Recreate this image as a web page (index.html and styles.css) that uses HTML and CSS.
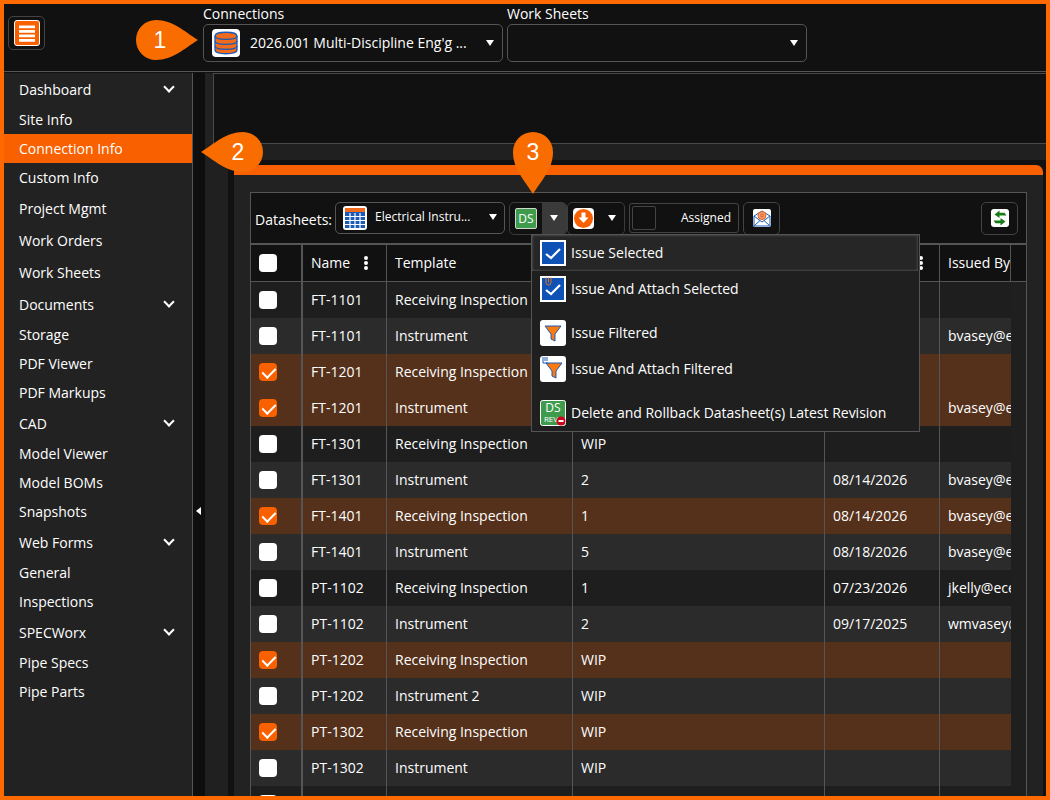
FILE: index.html
```html
<!DOCTYPE html>
<html lang="en">

<head>
  <meta charset="UTF-8">
  <meta name="viewport" content="width=device-width, initial-scale=1.0">
  <title>Connection Info</title>
  <link rel="stylesheet" href="styles.css">
</head>

<body>
  <div class="app">
    <header class="topbar">
      <button class="menu-btn">
        <svg width="26" height="26" viewBox="0 0 26 26">
          <rect x="0.5" y="0.5" width="25" height="25" rx="2.5" fill="#f86000" stroke="#fff"/>
          <path d="M5 5.500h16v2.800H5zM5 10h16v2.800H5zM5 14.500h16v2.800H5zM5 19h16v2.800H5z" fill="#fff"/>
        </svg>
      </button>
      <div class="field field-connections">
        <label>Connections</label>
        <div class="select">
          <svg class="select-icon" width="28" height="28" viewBox="0 0 28 28">
            <rect width="28" height="28" rx="4" fill="#fff"/>
            <path d="M3 7c0-5 22-5 22 0v14c0 5-22 5-22 0z" fill="#f26a1b" stroke="#1b5bb5" stroke-width="1.3"/>
            <path d="M3 7c0 4.500 22 4.500 22 0M3 12c0 4.500 22 4.500 22 0M3 17c0 4.500 22 4.500 22 0" fill="none" stroke="#1b5bb5" stroke-width="1.3"/>
          </svg>
          <span class="select-text">2026.001 Multi-Discipline Eng'g ...</span>
          <i class="caret"></i>
        </div>
      </div>
      <div class="field">
        <label>Work Sheets</label>
        <div class="select">
          <span class="select-text"></span>
          <i class="caret"></i>
        </div>
      </div>
    </header>

    <div class="main">
      <nav class="sidebar">
        <a class="nav-item nav-parent">Dashboard<i class="chevron"></i></a>
        <a class="nav-item">Site Info</a>
        <a class="nav-item active">Connection Info</a>
        <a class="nav-item">Custom Info</a>
        <a class="nav-item nav-parent">Project Mgmt</a>
        <a class="nav-item nav-parent">Work Orders</a>
        <a class="nav-item nav-parent">Work Sheets</a>
        <a class="nav-item nav-parent">Documents<i class="chevron"></i></a>
        <a class="nav-item">Storage</a>
        <a class="nav-item">PDF Viewer</a>
        <a class="nav-item">PDF Markups</a>
        <a class="nav-item nav-parent">CAD<i class="chevron"></i></a>
        <a class="nav-item">Model Viewer</a>
        <a class="nav-item">Model BOMs</a>
        <a class="nav-item">Snapshots</a>
        <a class="nav-item nav-parent">Web Forms<i class="chevron"></i></a>
        <a class="nav-item">General</a>
        <a class="nav-item">Inspections</a>
        <a class="nav-item nav-parent">SPECWorx<i class="chevron"></i></a>
        <a class="nav-item">Pipe Specs</a>
        <a class="nav-item">Pipe Parts</a>
      </nav>

      <div class="splitter"><i class="splitter-arrow"></i></div>

      <section class="content">
        <div class="viewer"></div>
        <div class="lower">
          <div class="panel-outer">
            <div class="panel">
              <div class="grid">
                <div class="toolbar">
                  <span class="toolbar-label">Datasheets:</span>
                  <div class="select select-small">
                    <svg width="24" height="24" viewBox="0 0 24 24">
                      <rect width="24" height="24" rx="3" fill="#fff"/>
                      <rect x="2" y="2" width="20" height="20" fill="#1b5bb5"/>
                      <rect x="2" y="2" width="20" height="4" fill="#f26a1b"/>
                      <path d="M2 10.500h20M2 14.500h20M2 18.500h20M7 7v15M12 7v15M17 7v15" stroke="#fff" stroke-width="1.200"/>
                    </svg>
                    <span class="select-text">Electrical Instru...</span>
                    <i class="caret"></i>
                  </div>
                  <div class="split-btn">
                    <span class="split-main">
                      <svg width="22" height="21" viewBox="0 0 22 21">
                        <rect x="0.500" y="0.500" width="21" height="20" rx="1.500" fill="#3f9b4c" stroke="#cfd8cf"/>
                        <text x="11" y="15" class="icon-text" font-size="12">DS</text>
                      </svg>
                    </span>
                    <span class="split-caret open"><i class="caret"></i></span>
                  </div>
                  <div class="split-btn split-btn-flush">
                    <span class="split-main">
                      <svg width="21" height="21" viewBox="0 0 21 21">
                        <rect width="21" height="21" rx="4" fill="#fff"/>
                        <circle cx="10.500" cy="10.500" r="9.500" fill="#f86000"/>
                        <path d="M8.500 4.500h4v5h3l-5 5.500-5-5.500h3z" fill="#fff"/>
                      </svg>
                    </span>
                    <span class="split-caret"><i class="caret"></i></span>
                  </div>
                  <div class="toggle">
                    <span class="toggle-knob"></span>
                    <span>Assigned</span>
                  </div>
                  <button class="icon-btn">
                    <svg width="18" height="18" viewBox="0 0 18 18">
                      <rect width="18" height="18" rx="2" fill="#fff"/>
                      <path d="M1 7l8-5 8 5v10H1zM1 7l8 6 8-6M1 17l6-5.500M17 17l-6-5.500" fill="#fff" stroke="#1b5bb5"/>
                      <circle cx="9" cy="6.500" r="4" fill="#f2a074" stroke="#e2601a"/>
                      <circle cx="9" cy="6.500" r="1.500" fill="none" stroke="#e2601a"/>
                    </svg>
                  </button>
                  <button class="icon-btn icon-btn-refresh">
                    <svg width="18" height="18" viewBox="0 0 18 18">
                      <rect width="18" height="18" rx="3" fill="#fff"/>
                      <path d="M3.500 5.500l5-4v2.200h5l2 2.800h-7v2.500z" fill="#167d16"/>
                      <path d="M14.500 12.500l-5 4v-2.200h-5l-2-2.800h7V9z" fill="#167d16"/>
                    </svg>
                  </button>
                </div>

                <div class="grid-body">
                  <table class="sheet-table">
                    <colgroup>
                      <col class="col-check">
                      <col class="col-name">
                      <col class="col-template">
                      <col class="col-rev">
                      <col class="col-date">
                      <col class="col-issued">
                    </colgroup>
                    <thead>
                      <tr>
                        <th class="cell-check"><span class="check"></span></th>
                        <th>Name<i class="col-menu"></i></th>
                        <th>Template</th>
                        <th></th>
                        <th><i class="col-menu col-menu-date"></i></th>
                        <th class="cell-last">Issued By</th>
                      </tr>
                    </thead>
                    <tbody>
                      <tr><td class="cell-check"><span class="check"></span></td><td>FT-1101</td><td>Receiving Inspection</td><td></td><td></td><td class="cell-last"></td></tr>
                      <tr><td class="cell-check"><span class="check"></span></td><td>FT-1101</td><td>Instrument</td><td></td><td></td><td class="cell-last">bvasey@ece.com</td></tr>
                      <tr class="selected"><td class="cell-check"><span class="check checked"></span></td><td>FT-1201</td><td>Receiving Inspection</td><td></td><td></td><td class="cell-last"></td></tr>
                      <tr class="selected"><td class="cell-check"><span class="check checked"></span></td><td>FT-1201</td><td>Instrument</td><td></td><td></td><td class="cell-last">bvasey@ece.com</td></tr>
                      <tr><td class="cell-check"><span class="check"></span></td><td>FT-1301</td><td>Receiving Inspection</td><td>WIP</td><td></td><td class="cell-last"></td></tr>
                      <tr><td class="cell-check"><span class="check"></span></td><td>FT-1301</td><td>Instrument</td><td>2</td><td>08/14/2026</td><td class="cell-last">bvasey@ece.com</td></tr>
                      <tr class="selected"><td class="cell-check"><span class="check checked"></span></td><td>FT-1401</td><td>Receiving Inspection</td><td>1</td><td>08/14/2026</td><td class="cell-last">bvasey@ece.com</td></tr>
                      <tr><td class="cell-check"><span class="check"></span></td><td>FT-1401</td><td>Instrument</td><td>5</td><td>08/18/2026</td><td class="cell-last">bvasey@ece.com</td></tr>
                      <tr><td class="cell-check"><span class="check"></span></td><td>PT-1102</td><td>Receiving Inspection</td><td>1</td><td>07/23/2026</td><td class="cell-last">jkelly@ece.com</td></tr>
                      <tr><td class="cell-check"><span class="check"></span></td><td>PT-1102</td><td>Instrument</td><td>2</td><td>09/17/2025</td><td class="cell-last">wmvasey@ece.com</td></tr>
                      <tr class="selected"><td class="cell-check"><span class="check checked"></span></td><td>PT-1202</td><td>Receiving Inspection</td><td>WIP</td><td></td><td class="cell-last"></td></tr>
                      <tr><td class="cell-check"><span class="check"></span></td><td>PT-1202</td><td>Instrument 2</td><td>WIP</td><td></td><td class="cell-last"></td></tr>
                      <tr class="selected"><td class="cell-check"><span class="check checked"></span></td><td>PT-1302</td><td>Receiving Inspection</td><td>WIP</td><td></td><td class="cell-last"></td></tr>
                      <tr><td class="cell-check"><span class="check"></span></td><td>PT-1302</td><td>Instrument</td><td>WIP</td><td></td><td class="cell-last"></td></tr>
                      <tr><td class="cell-check"><span class="check"></span></td><td></td><td></td><td></td><td></td><td class="cell-last"></td></tr>
                    </tbody>
                  </table>
                  <div class="grid-strip"><div class="grid-strip-head"></div></div>
                </div>
              </div>
            </div>
          </div>
        </div>
      </section>
    </div>

    <!-- dropdown of the issue button -->
    <div class="issue-menu">
      <div class="issue-item hover">
        <svg width="26" height="26" viewBox="0 0 26 26">
          <rect x="1" y="1" width="24" height="24" fill="#0f52b5" stroke="#fff" stroke-width="2"/>
          <path d="M6 14l5 4 9-9" fill="none" stroke="#fff" stroke-width="2.200"/>
        </svg>
        <span>Issue Selected</span>
      </div>
      <div class="issue-item">
        <svg width="26" height="26" viewBox="0 0 26 26">
          <rect x="1" y="1" width="24" height="24" fill="#0f52b5" stroke="#fff" stroke-width="2"/>
          <path d="M6 14l5 4 9-9" fill="none" stroke="#fff" stroke-width="2.200"/>
          <path d="M6 1.500v5a2.500 2.500 0 0 0 5 0v-5M8.500 1.500v5" fill="none" stroke="#e2701f"/>
        </svg>
        <span>Issue And Attach Selected</span>
      </div>
      <div class="issue-item issue-gap">
        <svg width="26" height="26" viewBox="0 0 26 26">
          <rect width="26" height="26" rx="3" fill="#fff"/>
          <path d="M5 6h16l-6 8v7l-4-2v-5z" fill="#f97a10" stroke="#1b5bb5"/>
        </svg>
        <span>Issue Filtered</span>
      </div>
      <div class="issue-item">
        <svg width="26" height="26" viewBox="0 0 26 26">
          <rect width="26" height="26" rx="3" fill="#fff"/>
          <path d="M6 7h16l-6 8v7l-4-2v-5z" fill="#f97a10" stroke="#1b5bb5"/>
          <path d="M3 1v6h5M5 1v4M7 1v4" fill="none" stroke="#1b5bb5"/>
        </svg>
        <span>Issue And Attach Filtered</span>
      </div>
      <div class="issue-item issue-gap">
        <svg width="26" height="26" viewBox="0 0 26 26">
          <rect x="0.500" y="0.500" width="25" height="25" rx="2" fill="#3f9b4c" stroke="#fff"/>
          <text x="13" y="12" class="icon-text" font-size="12">DS</text>
          <text x="11" y="22" class="icon-text" font-size="8">REV</text>
          <circle cx="21" cy="21" r="4.500" fill="#d0021b"/>
          <rect x="18.500" y="20" width="5" height="2" fill="#fff"/>
        </svg>
        <span>Delete and Rollback Datasheet(s) Latest Revision</span>
      </div>
    </div>

    <!-- numbered callouts -->
    <svg class="callout callout-1" width="64" height="42" viewBox="0 0 64 42">
      <path d="M63 21C50 13 38 1 21 1a20 20 0 0 0 0 40C38 41 50 29 63 21z"/>
      <text x="25" y="29">1</text>
    </svg>
    <svg class="callout callout-2" width="64" height="42" viewBox="0 0 64 42">
      <path d="M1 21C14 13 26 1 43 1a20 20 0 0 1 0 40C26 41 14 29 1 21z"/>
      <text x="38" y="29">2</text>
    </svg>
    <svg class="callout callout-3" width="42" height="64" viewBox="0 0 42 64">
      <path d="M21 63C13 50 1 38 1 21a20 20 0 0 1 40 0C41 38 29 50 21 63z"/>
      <text x="21" y="29">3</text>
    </svg>
  </div>
</body>

</html>
```

FILE: styles.css
```css
* {
  box-sizing: border-box;
}

body {
  margin: 0;
  background: #111;
  font-family: "Open Sans", "Liberation Sans", sans-serif;
  font-size: 14px;
  color: #fff;
}

.app {
  position: relative;
  display: flex;
  flex-direction: column;
  width: 1050px;
  height: 800px;
  border: 4px solid #ff6a00;
  overflow: hidden;
  background: #111;
}

/* top bar */
.topbar {
  display: flex;
  flex-shrink: 0;
  height: 68px;
  border-bottom: 1px solid #555;
  padding-left: 4px;
}

.menu-btn {
  display: flex;
  align-items: center;
  justify-content: center;
  width: 37px;
  height: 34px;
  margin-top: 12px;
  padding: 0;
  background: #111;
  border: 1px solid #444;
  border-radius: 5px;
}

.field {
  display: flex;
  flex-direction: column;
  width: 300px;
  margin-left: 4px;
}

.field-connections {
  margin-left: 158px;
}

.field label {
  height: 20px;
  line-height: 20px;
}

.select {
  display: flex;
  align-items: center;
  height: 38px;
  padding: 0 8px 0 8px;
  border: 1px solid #555;
  border-radius: 5px;
}

.select-icon {
  flex-shrink: 0;
}

.select-text {
  flex: 1;
  margin-left: 10px;
  padding-bottom: 2px;
  white-space: nowrap;
  overflow: hidden;
}

.caret {
  display: block;
  width: 0;
  height: 0;
  border-left: 4px solid transparent;
  border-right: 4px solid transparent;
  border-top: 6px solid #fff;
}

/* body */
.main {
  display: flex;
  flex: 1;
  min-height: 0;
  margin-top: 1px;
  overflow: hidden;
}

.sidebar {
  flex-shrink: 0;
  width: 189px;
  background: #222;
  border-right: 1px solid #555;
}

.nav-item {
  display: flex;
  align-items: center;
  justify-content: space-between;
  height: 29px;
  padding: 0 17px 0 15px;
}

.nav-parent {
  height: 32px;
}

.nav-item.active {
  background: #f86000;
}

.chevron {
  display: block;
  width: 8px;
  height: 8px;
  margin: -5px 2px 0 0;
  border-right: 2px solid #fff;
  border-bottom: 2px solid #fff;
  transform: rotate(45deg);
}

/* the bar runs on below the window, so its arrow sits low */
.splitter {
  display: flex;
  flex-shrink: 0;
  align-items: center;
  justify-content: center;
  width: 12px;
  height: 876px;
  background: #0e0e0e;
}

.splitter-arrow {
  display: block;
  margin-right: 1px;
  border-top: 4px solid transparent;
  border-bottom: 4px solid transparent;
  border-right: 5px solid #fff;
}

.content {
  display: flex;
  flex: 1;
  flex-direction: column;
  min-width: 0;
  height: 723px;
  background: #222;
}

.viewer {
  flex-shrink: 0;
  height: 71px;
  margin-left: 8px;
  background: #111;
  border: 1px solid #4a4a4a;
  border-right: none;
}

.lower {
  flex: 1;
  min-height: 0;
  padding: 16px 0 0 23px;
  background: #202020;
}

.panel-outer {
  height: 100%;
  padding: 5px 3px 0 6px;
  background: #111;
}

.panel {
  height: 100%;
  padding: 17px 16px 0;
  background: #222;
  border-top: 10px solid #f86000;
  border-top-right-radius: 7px;
}

.grid {
  height: 640px;
  background: #111;
  border: 1px solid #555;
}

/* toolbar over the table */
.toolbar {
  display: flex;
  align-items: center;
  height: 52px;
  padding-left: 4px;
  border-bottom: 2px solid #555;
}

.toolbar-label {
  width: 80px;
  padding-top: 3px;
}

.select-small {
  width: 170px;
  height: 32px;
  padding: 0 7px;
  font-size: 12px;
}

.select-small .select-text {
  margin-left: 8px;
  padding-bottom: 4px;
}

.select-small .caret {
  margin: 0 0 3px;
}

.split-btn {
  display: flex;
  width: 58px;
  height: 33px;
  margin-left: 4px;
  border: 1px solid #3c3c3c;
  border-radius: 5px;
  overflow: hidden;
}

.split-btn-flush {
  margin-left: 0;
}

.split-main {
  display: flex;
  align-items: center;
  width: 32px;
  padding-left: 5px;
}

.split-caret {
  display: flex;
  flex: 1;
  align-items: center;
  justify-content: center;
}

.split-caret.open {
  background: #3a3a3a;
}

.toggle {
  display: flex;
  align-items: center;
  justify-content: space-between;
  width: 110px;
  height: 30px;
  margin-left: 4px;
  padding: 0 7px 2px 2px;
  border: 1px solid #444;
  border-radius: 3px;
  font-size: 12px;
}

.toggle-knob {
  width: 24px;
  height: 24px;
  margin-top: 2px;
  border: 1px solid #444;
  border-radius: 2px;
}

.icon-btn {
  display: flex;
  align-items: center;
  justify-content: center;
  width: 37px;
  height: 33px;
  margin-left: 4px;
  padding: 0;
  background: #111;
  border: 1px solid #444;
  border-radius: 5px;
}

.icon-btn-refresh {
  margin-left: auto;
  margin-right: 8px;
}

.icon-text {
  fill: #fff;
  text-anchor: middle;
  font-family: "Open Sans", "Liberation Sans", sans-serif;
}

/* table */
.grid-body {
  display: flex;
  align-items: flex-start;
}

.sheet-table {
  flex-shrink: 0;
  width: 760px;
  border-collapse: separate;
  border-spacing: 0;
  table-layout: fixed;
}

.col-check {
  width: 52px;
}

.col-name {
  width: 84px;
}

.col-template {
  width: 186px;
}

.col-rev {
  width: 252px;
}

.col-date {
  width: 115px;
}

.col-issued {
  width: 71px;
}

.sheet-table th,
.sheet-table td {
  height: 36px;
  padding: 0 0 2px 8px;
  text-align: left;
  font-weight: 400;
  white-space: nowrap;
  overflow: hidden;
  border-right: 1px solid #555;
}

.sheet-table th {
  position: relative;
  height: 37px;
  background: #111;
  border-bottom: 1px solid #555;
}

.sheet-table .cell-check {
  padding: 0 0 0 8px;
  border-right-width: 2px;
}

.sheet-table .cell-last {
  padding-right: 0;
  border-right: none;
}

.sheet-table th.cell-last {
  border-right: 1px solid #555;
}

.sheet-table tbody tr:nth-child(odd) td {
  background: #1e1e1e;
}

.sheet-table tbody tr:nth-child(even) td {
  background: #2b2b2b;
}

.sheet-table tbody tr.selected td {
  background: #55301a;
}

.check {
  display: block;
  position: relative;
  width: 18px;
  height: 18px;
  background: #fff;
  border-radius: 4px;
}

.check.checked {
  background: #f86000;
}

.check.checked::after {
  content: "";
  position: absolute;
  left: 6px;
  top: 2px;
  width: 6px;
  height: 11px;
  border-right: 2px solid #fff;
  border-bottom: 2px solid #fff;
  transform: rotate(45deg);
}

.col-menu {
  position: absolute;
  left: 61px;
  top: 11px;
  width: 4px;
  height: 4px;
  background: #fff;
  border-radius: 50%;
  box-shadow: 0 5px 0 #fff, 0 10px 0 #fff;
}

.col-menu-date {
  left: 94px;
}

.grid-strip {
  flex: 1;
  height: 600px;
  background: #1f1f1f;
}

.grid-strip-head {
  height: 37px;
  background: #111;
  border-bottom: 1px solid #555;
}

/* dropdown */
.issue-menu {
  position: absolute;
  left: 527px;
  top: 230px;
  width: 389px;
  height: 198px;
  background: #1f1f1f;
  border: 1px solid #555;
}

.issue-item {
  display: flex;
  align-items: center;
  gap: 5px;
  height: 36px;
  padding-left: 8px;
}

.issue-item span {
  padding-bottom: 2px;
}

.issue-item.hover {
  margin-right: 1px;
  background: #262626;
  box-shadow: inset 0 0 3px #666;
}

.issue-gap {
  margin-top: 8px;
}

/* numbered callouts */
.callout {
  position: absolute;
}

.callout path {
  fill: #f96c00;
}

.callout text {
  fill: #fff;
  text-anchor: middle;
  font-family: "Liberation Sans", sans-serif;
  font-size: 23px;
}

.callout-1 {
  left: 131px;
  top: 15px;
}

.callout-2 {
  left: 196px;
  top: 127px;
}

.callout-3 {
  left: 508px;
  top: 127px;
}
```
